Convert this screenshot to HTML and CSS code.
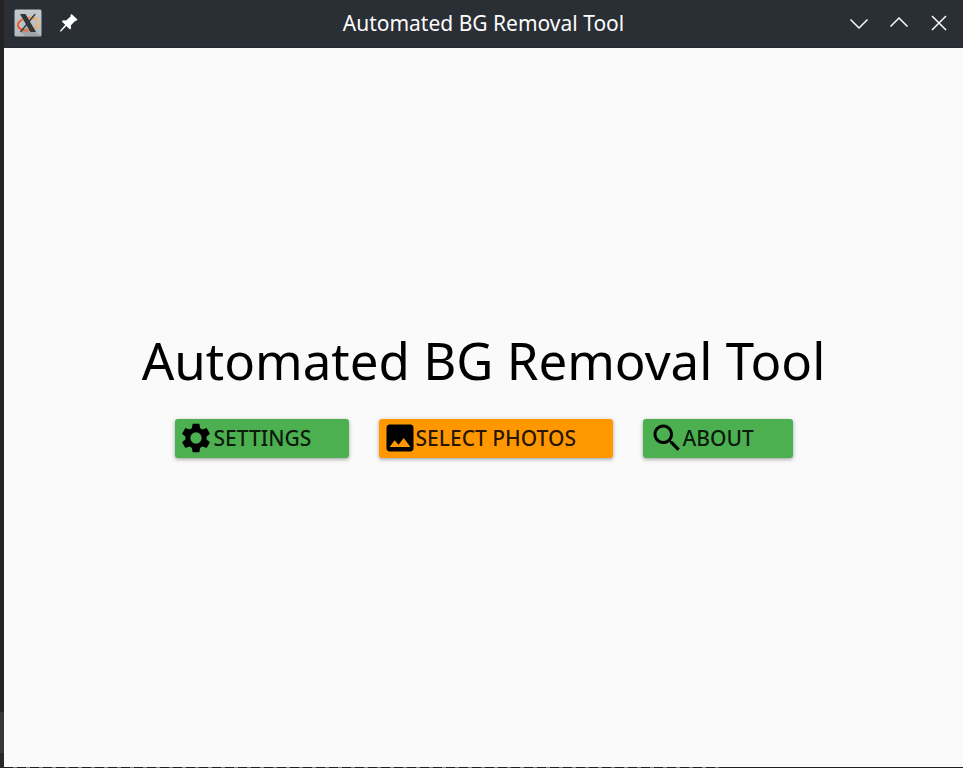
FILE: index.html
```html
<!DOCTYPE html>
<html lang="en">
<head>
<meta charset="utf-8">
<title>Automated BG Removal Tool</title>
<link rel="stylesheet" href="styles.css">
</head>
<body>
<div class="backdrop"></div>
<div class="window">
  <header class="titlebar">
    <div class="left">
      <svg class="logo" viewBox="0 0 28 28">
        <defs>
          <linearGradient id="tile" x2="0" y2="1"><stop stop-color="#c3c8cb"/><stop offset="1" stop-color="#b3b9bd"/></linearGradient>
          <linearGradient id="ring" gradientUnits="userSpaceOnUse" x1="3" x2="25" y1="14" y2="14"><stop stop-color="#f0481c"/><stop offset=".5" stop-color="#f0783a"/><stop offset="1" stop-color="#f7bd6c"/></linearGradient>
        </defs>
        <rect x=".5" y=".5" width="27" height="27" rx="1.5" fill="url(#tile)"/>
        <path d="M7 23L13 18L21 23L27 27H11z" fill="#9da3a7"/>
        <ellipse cx="14.200" cy="15" rx="10.300" ry="6.300" transform="rotate(-10 14.200 15)" fill="none" stroke="url(#ring)" stroke-width="1.800"/>
        <path d="M21.200 5L6.500 23" stroke="#31363b" stroke-width="1.300"/>
        <path d="M6 5h5.500L22 23h-5.500z" fill="#31363b"/>
      </svg>
      <svg class="pin" viewBox="0 0 20 20">
        <path d="M12.500 1L18.500 6.500L16.800 8.200L16 8L11.800 12.500L12.200 15.200L11 16.400L7.300 12.900L2 18.400L1 18.500L1.200 17.400L6.200 11.800L2.800 8.400L4.200 7.300L7 7.500L11.600 3.400L11.400 2.200z" fill="#fff"/>
      </svg>
    </div>
    <div class="caption">Automated BG Removal Tool</div>
    <svg class="controls" viewBox="0 0 104 20">
      <path d="M4.500 6.500L13 15L21.500 6.500M44.500 13.500L53 5L61.500 13.500M86 3L100 17M100 3L86 17"/>
    </svg>
  </header>
  <main class="content">
    <h1>Automated BG Removal Tool</h1>
    <div class="actions">
      <button class="btn settings">
        <svg viewBox="0 0 24 24"><path d="M12 8A4 4 0 0 0 12 16A4 4 0 0 0 12 8M19.430 12.980c.04-.32.07-.64.07-.98s-.03-.66-.07-.98l2.110-1.650c.19-.15.24-.42.12-.64l-2-3.460c-.12-.22-.39-.3-.61-.22l-2.490 1c-.52-.4-1.080-.73-1.690-.98l-.38-2.650C14.460 2.180 14.250 2 14 2h-4c-.25 0-.46.18-.49.42l-.38 2.650c-.61.25-1.170.59-1.690.98l-2.490-1c-.23-.09-.49 0-.61.22l-2 3.460c-.13.22-.07.49.12.64l2.110 1.650c-.04.32-.07.65-.07.98s.03.66.07.98l-2.110 1.650c-.19.15-.24.42-.12.64l2 3.460c.12.22.39.3.61.22l2.490-1c.52.4 1.080.73 1.690.98l.38 2.650c.03.24.24.42.49.42h4c.25 0 .46-.18.49-.42l.38-2.650c.61-.25 1.170-.59 1.690-.98l2.490 1c.23.09.49 0 .61-.22l2-3.460c.12-.22.07-.49-.12-.64z" fill-rule="evenodd"/></svg>
        <span>SETTINGS</span>
      </button>
      <button class="btn photos">
        <svg viewBox="0 0 24 24"><path d="M21 19V5c0-1.100-.9-2-2-2H5c-1.100 0-2 .9-2 2v14c0 1.100.9 2 2 2h14c1.100 0 2-.9 2-2zM8.500 13.500l2.500 3.010L14.500 12l4.500 6H5l3.500-4.500z"/></svg>
        <span>SELECT PHOTOS</span>
      </button>
      <button class="btn about">
        <svg viewBox="0 0 24 24"><path d="M15.500 14h-.79l-.28-.27C15.410 12.590 16 11.110 16 9.500 16 5.910 13.090 3 9.500 3S3 5.910 3 9.500 5.910 16 9.500 16c1.610 0 3.090-.59 4.230-1.570l.27.28v.79l5 4.990L20.490 19l-4.990-5zm-6 0C7.010 14 5 11.990 5 9.500S7.010 5 9.500 5 14 7.010 14 9.500 11.990 14 9.500 14z"/></svg>
        <span>ABOUT</span>
      </button>
    </div>
  </main>
  <div class="edge"></div>
</div>
</body>
</html>
```
FILE: styles.css
```css
* { box-sizing: border-box; }
body {
  margin: 0;
  width: 963px;
  height: 768px;
  display: flex;
  overflow: hidden;
  font-family: "Noto Sans", sans-serif;
}
.backdrop {
  width: 4px;
  background: linear-gradient(#232323 0 712px, #363838 712px 753px, #292827 753px);
}
.window {
  flex: 1;
  display: flex;
  flex-direction: column;
  background: #fafafa;
}
.titlebar {
  height: 48px;
  display: grid;
  grid-template-columns: 112px 1fr 112px;
  align-items: center;
  padding-bottom: 1px;
  background: #2a2e35;
  border-bottom: 1px solid #292538;
  color: #fcfcfc;
}
.left { display: flex; align-items: center; padding-left: 10px; }
.logo { width: 28px; height: 28px; }
.pin { width: 20px; height: 20px; margin-left: 17px; }
.caption {
  text-align: center;
  font-size: 21px;
  line-height: 30px;
  padding-bottom: 1px;
  white-space: nowrap;
}
.controls {
  width: 104px;
  height: 20px;
  margin-left: -5px;
  fill: none;
  stroke: #fcfcfc;
  stroke-width: 1.5;
}
.content {
  flex: 1;
  display: flex;
  flex-direction: column;
  align-items: center;
  padding-top: 276px;
}
h1 {
  margin: 0;
  font-size: 51px;
  font-weight: 400;
  line-height: 72px;
  color: #000;
  white-space: nowrap;
}
.actions { display: flex; gap: 30px; margin-top: 23px; }
.btn {
  display: flex;
  align-items: center;
  height: 39px;
  padding: 0 0 1px 4px;
  border: 0;
  border-radius: 3px;
  background: #4caf50;
  color: rgba(0, 0, 0, .87);
  font: 500 21px/30px "Noto Sans", sans-serif;
  white-space: nowrap;
  box-shadow: 0 1px 5px rgba(0, 0, 0, .22), 0 2px 3px rgba(0, 0, 0, .14);
}
.btn svg { flex: none; width: 36px; height: 36px; fill: #000; }
.settings { width: 174px; }
.settings svg { width: 34px; height: 34px; }
.settings span { margin-left: 1px; }
.photos { width: 234px; padding-left: 3px; background: #ff9800; }
.photos span { margin-left: -2px; }
.about { width: 150px; padding-left: 6px; }
.about span { margin-left: -2px; }
.edge {
  height: 1px;
  background: repeating-linear-gradient(90deg, #201e24 0 9px, #777 9px 13px, #201e24 13px 22px, #8a8a8a 22px 26px) 0 0 / 722px 1px no-repeat #201e24;
}
```
